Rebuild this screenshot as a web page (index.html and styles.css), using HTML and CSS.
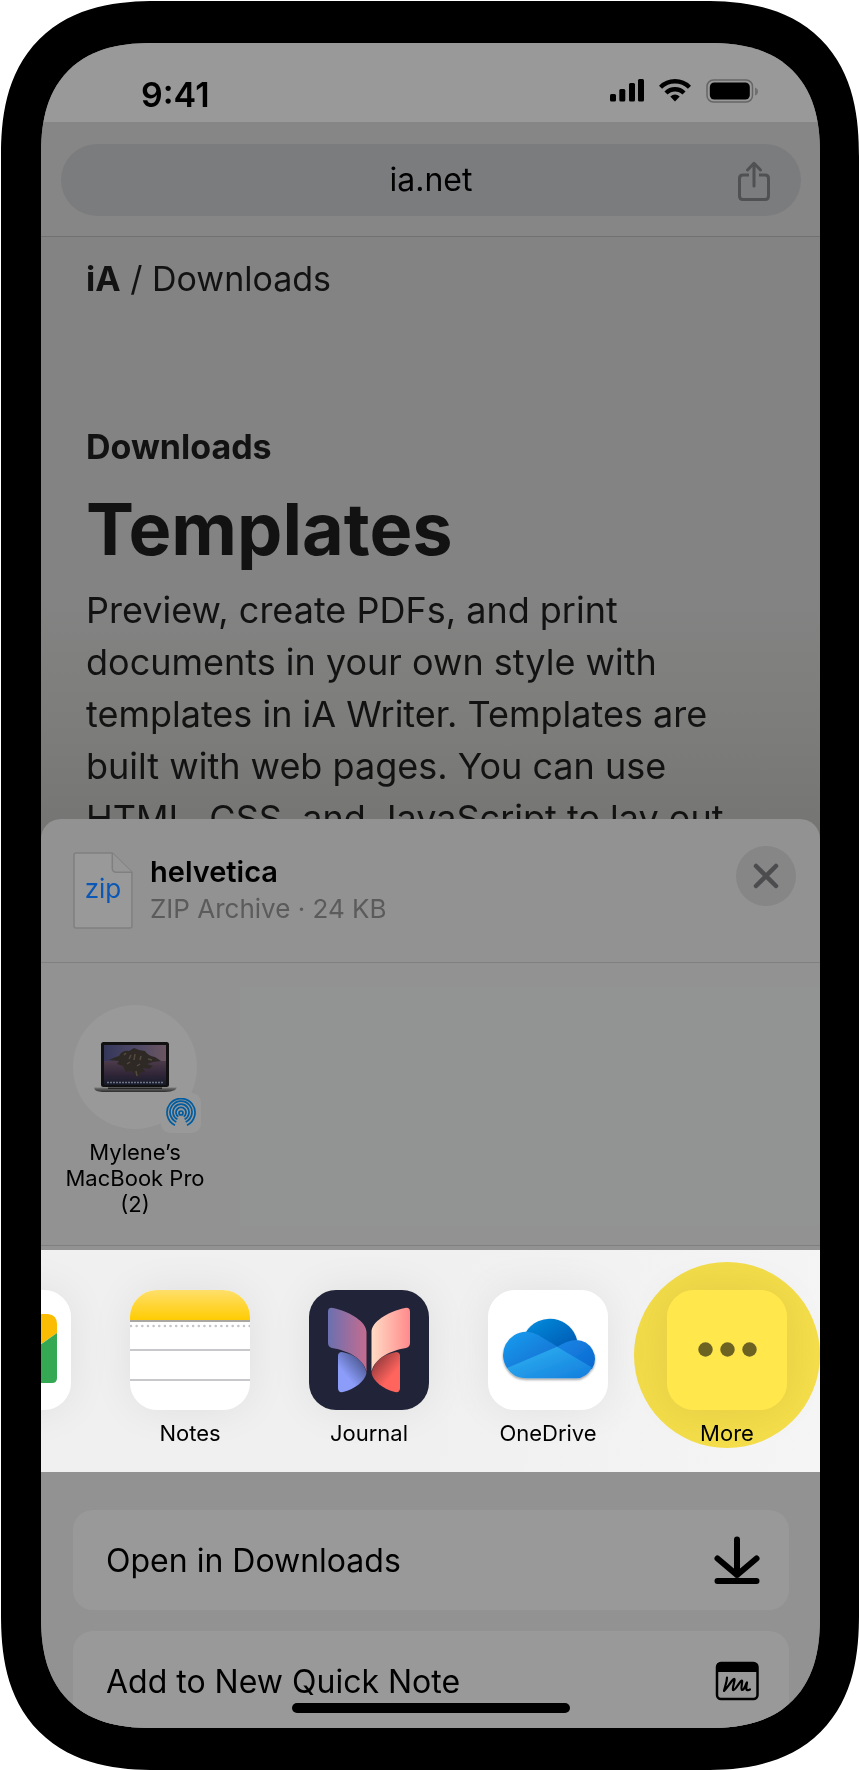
FILE: index.html
```html
<!DOCTYPE html>
<html lang="en">
<head>
<meta charset="utf-8">
<meta name="viewport" content="width=device-width, initial-scale=1">
<title>Templates</title>
<link rel="stylesheet" href="styles.css">
</head>
<body>
<div class="phone">
  <div class="screen">
    <header class="status">
      <time class="clock">9:41</time>
      <div class="indicators">
        <svg width="34" height="24" viewBox="0 0 34 24" aria-hidden="true"><rect x="0" y="15" width="6" height="7.500" rx="1.500"/><rect x="9.300" y="10" width="6" height="12.500" rx="1.500"/><rect x="19" y="4" width="6" height="18.500" rx="1.500"/><rect x="28" y="0" width="6" height="22.500" rx="1.500"/></svg>
        <svg width="32" height="24" viewBox="0 0 32 24" fill="none" stroke="#000" stroke-width="4.400" aria-hidden="true"><path d="M1.500 8.300C9.500 .300 22.500 .300 30.500 8.300"/><path d="M7 14C12 8.900 20 8.900 25 14"/><path d="M11.300 17.500Q16 13.700 20.700 17.500L16 22.400Z" fill="#000" stroke="none"/></svg>
        <svg width="53" height="24" viewBox="0 0 53 24" aria-hidden="true"><rect x="1" y="1" width="45.500" height="22" rx="6.500" fill="none" stroke="#666" stroke-width="1.500"/><rect x="3.800" y="3.500" width="40" height="17" rx="4.500"/><path d="M49 8.500Q52 9.500 52 12.500T49 16.500Z" fill="#707070"/></svg>
      </div>
    </header>

    <div class="toolbar">
      <div class="address">
        <input class="url" type="text" value="ia.net" aria-label="Address">
        <button class="share" type="button" aria-label="Share">
          <svg width="34" height="40" viewBox="0 0 34 40" fill="none" stroke="#505153" stroke-width="3" stroke-linecap="round" stroke-linejoin="round"><path d="M17 25V3M10.500 9 17 2.300 23.500 9"/><path stroke-linecap="butt" d="M12 14H6Q2.500 14 2.500 17.500V35Q2.500 38.500 6 38.500H28Q31.500 38.500 31.500 35V17.500Q31.500 14 28 14H22"/></svg>
        </button>
      </div>
    </div>

    <main class="page">
      <nav class="crumbs"><a class="home" href="#">iA</a> / <a href="#">Downloads</a></nav>
      <p class="kicker">Downloads</p>
      <h1 class="title">Templates</h1>
      <p class="intro">Preview, create PDFs, and print<br>documents in your own style with<br>templates in iA Writer. Templates are<br>built with web pages. You can use<br>HTML, CSS, and JavaScript to lay out</p>
    </main>

    <section class="sheet" aria-label="Share sheet">
      <header class="file">
        <svg class="file-icon" width="60" height="77" viewBox="0 0 58 76" preserveAspectRatio="none" aria-hidden="true"><path d="M3 1H38L57 20V73Q57 75 55 75H3Q1 75 1 73V3Q1 1 3 1Z" fill="#999" stroke="#808080" stroke-width="1.500"/><path d="M38 1V16Q38 20 42 20H57" fill="#969696" stroke="#808080" stroke-width="1.500"/></svg>
        <span class="file-type">zip</span>
        <div class="file-text">
          <h2 class="file-name">helvetica</h2>
          <p class="file-info">ZIP Archive · 24 KB</p>
        </div>
        <button class="close" type="button" aria-label="Close">
          <svg width="26" height="26" viewBox="0 0 26 26" stroke="#4c4c4f" stroke-width="4.500" stroke-linecap="round"><path d="M3 3 23 23M23 3 3 23"/></svg>
        </button>
      </header>

      <div class="people">
        <button class="person" type="button">
          <span class="avatar">
            <svg width="124" height="124" viewBox="0 0 124 124" aria-hidden="true">
              <defs>
                <linearGradient id="sky" x1="0" y1="0" x2="1" y2="0"><stop offset="0" stop-color="#34365a"/><stop offset=".5" stop-color="#4d4866"/><stop offset="1" stop-color="#6a5560"/></linearGradient>
                <linearGradient id="sea" x1="0" y1="0" x2="0" y2="1"><stop offset="0" stop-color="#4d3b4a"/><stop offset=".5" stop-color="#33283a"/><stop offset="1" stop-color="#171a2b"/></linearGradient>
                <linearGradient id="base" x1="0" y1="0" x2="0" y2="1"><stop offset="0" stop-color="#777"/><stop offset=".5" stop-color="#515152"/><stop offset="1" stop-color="#2d2d2e"/></linearGradient>
              </defs>
              <rect x="28" y="37" width="68" height="45" rx="2.500" fill="#111"/>
              <rect x="31" y="40" width="62" height="40" fill="url(#sky)"/>
              <path d="M31 56H93V80H31Z" fill="url(#sea)"/>
              <path d="M36 55Q42 52 46 51Q49 45 56 46L61 43L66 45L72 46Q75 51 82 52L88 56L80 57L74 59L80 61L76 64L70 63L72 67L66 68L68 73L62 70L58 66L53 67L50 61L44 59L46 56Z" fill="#2f2926"/>
              <path d="M51 50L53 48M56 54L58 50M62 49L61 55M68 51L67 55M75 54L79 55M54 59L57 57M64 61L67 59M63 66L64 71" fill="none" stroke="#544a40" stroke-width="1.500"/>
              <path d="M34 77.500H90" stroke="#6b7483" stroke-width="1.700" stroke-dasharray="2 1"/>
              <path d="M21 82.500H104L102 85Q98 87 92 87H33Q25 87 22 85Z" fill="url(#base)"/>
              <path d="M35 82.500H89V84H35Z" fill="#252525"/>
            </svg>
            <span class="badge">
              <svg width="30" height="30" viewBox="0 0 30 30" fill="none" stroke="#005c9f" stroke-width="1.700" aria-hidden="true"><path d="M9 27.200A14 14 0 1 1 21 27.200M10.300 24A11 11 0 1 1 19.700 24M11.400 21.300A8 8 0 1 1 18.600 21.300M12.300 18.600A5 5 0 1 1 17.700 18.600"/><circle cx="15" cy="15" r="2"/></svg>
            </span>
          </span>
          <span class="person-name">Mylene’s MacBook Pro (2)</span>
        </button>
        <div class="people-space"></div>
      </div>

      <div class="apps">
        <button class="app" type="button" aria-label="Meet">
          <svg class="app-icon" viewBox="0 0 120 120"><rect width="120" height="120" fill="#fff"/><path d="M60 24H97Q106 25 106 34V43L80 61H60Z" fill="#fbbc04"/><path d="M106 43V88Q106 93 101 93H60V75Z" fill="#34a853"/></svg>
        </button>
        <button class="app" type="button">
          <svg class="app-icon" viewBox="0 0 120 120" aria-hidden="true"><defs><linearGradient id="notes" x2="0" y2="1"><stop stop-color="#ffdf6b"/><stop offset="1" stop-color="#ffcc02"/></linearGradient></defs><rect width="120" height="120" fill="#fff"/><rect width="120" height="30" fill="url(#notes)"/><path d="M0 31H120" stroke="#aaa7a0" stroke-width="2"/><path d="M0 60H120M0 90H120" stroke="#c8c7cc" stroke-width="2"/><path d="M1 36H120" stroke="#c4c4c9" stroke-width="2.600" stroke-linecap="round" stroke-dasharray="0 5.650"/></svg>
          <span class="app-name">Notes</span>
        </button>
        <button class="app" type="button">
          <svg class="app-icon" viewBox="0 0 120 120" aria-hidden="true">
            <defs>
              <linearGradient id="wing-a"><stop stop-color="#6a70b0"/><stop offset="1" stop-color="#c56c8f"/></linearGradient>
              <linearGradient id="wing-b"><stop stop-color="#ffdcc4"/><stop offset="1" stop-color="#ff8a8c"/></linearGradient>
              <linearGradient id="wing-c" x1=".8" y1="0" x2=".3" y2=".6"><stop stop-color="#424d80"/><stop offset="1" stop-color="#8b9cf9"/></linearGradient>
              <linearGradient id="wing-d" x1=".2" y1="0" x2=".7" y2=".6"><stop stop-color="#843438"/><stop offset="1" stop-color="#ff645d"/></linearGradient>
            </defs>
            <rect width="120" height="120" fill="#212338"/>
            <path d="M29 66Q29 62 33 62Q54 66 57.500 83C56 91 46 99 34 102Q29 103 29 98Z" fill="url(#wing-c)"/>
            <path d="M91 66Q91 62 87 62Q66 66 62.500 83C64 91 74 99 86 102Q91 103 91 98Z" fill="url(#wing-d)"/>
            <path d="M19 22Q19 17 24 18C42 22 57.500 32 57.500 42V82C55 68 37 60 23 58Q19 57 19 53Z" fill="url(#wing-a)"/>
            <path d="M101 22Q101 17 96 18C78 22 62.500 32 62.500 42V82C65 68 83 60 97 58Q101 57 101 53Z" fill="url(#wing-b)"/>
          </svg>
          <span class="app-name">Journal</span>
        </button>
        <button class="app" type="button">
          <svg class="app-icon" viewBox="0 0 120 120" aria-hidden="true">
            <defs>
              <linearGradient id="cloud-a" x2="1" y2="1"><stop stop-color="#088ddd"/><stop offset="1" stop-color="#0056b0"/></linearGradient>
              <linearGradient id="cloud-b" x2="1" y2="1"><stop stop-color="#1a9ff0"/><stop offset="1" stop-color="#1269cf"/></linearGradient>
              <linearGradient id="cloud-c" x2="1" y2="1"><stop stop-color="#1a86e4"/><stop offset="1" stop-color="#0a68d0"/></linearGradient>
              <linearGradient id="cloud-d" x2="1" y2="1"><stop stop-color="#30b5f2"/><stop offset="1" stop-color="#137ddd"/></linearGradient>
              <filter id="cloud-shadow" x="-20%" y="-20%" width="140%" height="150%"><feDropShadow dx="0" dy="1.500" stdDeviation="1.200" flood-opacity=".4"/></filter>
            </defs>
            <rect width="120" height="120" fill="#fff"/>
            <g filter="url(#cloud-shadow)">
              <path d="M38 42A28 28 0 0 1 89 50L80 60H60Z" fill="url(#cloud-a)"/>
              <path d="M19 78A23.300 23.300 0 0 1 38 41.700Q45 42 50 45L70 57L50 78Z" fill="url(#cloud-b)"/>
              <path d="M69 57Q80 50 88 50A19 19 0 0 1 104 79L90 80Z" fill="url(#cloud-c)"/>
              <path d="M19 78L69 56.700L104 77.500Q99 88 88 88.300H38Q25 88 19 78Z" fill="url(#cloud-d)"/>
            </g>
          </svg>
          <span class="app-name">OneDrive</span>
        </button>
        <button class="app highlighted" type="button">
          <svg class="app-icon" viewBox="0 0 120 120" aria-hidden="true"><rect width="120" height="120" fill="#fff"/><g fill="#6c6c71"><circle cx="38.500" cy="59.500" r="7.200"/><circle cx="60.500" cy="59.500" r="7.200"/><circle cx="82.500" cy="59.500" r="7.200"/></g></svg>
          <span class="app-name">More</span>
        </button>
      </div>

      <div class="actions">
        <button class="action" type="button">Open in Downloads
          <svg width="46" height="48" viewBox="0 0 46 48" fill="none" stroke="#000" stroke-width="6" stroke-linecap="round" stroke-linejoin="round" aria-hidden="true"><path d="M23 3.500V39M3.500 22.500 23 39 42.500 22.500M3.500 45H42.500"/></svg>
        </button>
        <button class="action" type="button">Add to New Quick Note
          <svg width="46" height="40" viewBox="0 0 46 40" fill="none" stroke="#000" aria-hidden="true"><rect x="3" y="2" width="40.500" height="36" rx="4" stroke-width="2.500"/><path d="M3 10.500V5Q3 2 6 2H40Q43.500 2 43.500 5V10.500Z" fill="#000"/><path d="M13 16.500C13 21 11 25 10 30C14 26 17 20 20 18C22 17 18 27 19 29C21 30 25 22 27 20C30 17 26 28 28 29C31 29 33 19 33 22C32 26 31 31 36 28.500" stroke-width="2.200" stroke-linecap="round" stroke-linejoin="round"/></svg>
        </button>
      </div>
    </section>
    <div class="home-bar"></div>
  </div>
</div>
</body>
</html>
```

FILE: styles.css
```css
* {
  box-sizing: border-box;
}

body {
  margin: 0;
  padding: 1px 1px 0;
  background: #fff;
  color: #000;
  font-family: Inter, "Liberation Sans", sans-serif;
}

h1,
h2,
p {
  margin: 0;
}

svg {
  display: block;
  flex: none;
}

a {
  color: inherit;
  text-decoration: none;
}

button,
input {
  margin: 0;
  padding: 0;
  border: 0;
  background: none;
  color: inherit;
  font: inherit;
}

.phone {
  padding: 42px 39px 42px 40px;
  border-radius: 128px;
  background: #000;
}

.screen {
  position: relative;
  overflow: hidden;
  border-radius: 88px;
  background: #838383;
}

@supports (corner-shape: superellipse(1.3)) {
  .phone {
    border-radius: 156px;
    corner-shape: superellipse(1.3);
  }

  .screen {
    border-radius: 112px;
    corner-shape: superellipse(1.3);
  }
}

/* Status bar */

.status {
  display: flex;
  justify-content: space-between;
  align-items: flex-start;
  padding: 32px 61px 7px 100px;
  background: #999;
}

.clock {
  font-size: 34px;
  font-weight: 600;
  line-height: 40px;
}

.indicators {
  display: flex;
  gap: 15px;
  padding-top: 4px;
}

/* Address bar */

.toolbar {
  padding: 22px 19px 20px 20px;
  border-bottom: 1px solid #717171;
  background: #868686;
}

.address {
  display: flex;
  align-items: center;
  height: 72px;
  padding: 0 30px;
  border-radius: 36px;
  background: #7b7c7e;
}

.url {
  flex: 1;
  min-width: 0;
  padding-left: 34px;
  font-size: 32px;
  line-height: 40px;
  text-align: center;
}

.share {
  padding-top: 2px;
}

/* Web page */

.page {
  padding: 22px 45px 0;
  background: linear-gradient(#838383 60%, #7d7d7b 80%, #747472);
  color: #121212;
}

.crumbs {
  font-size: 34px;
  line-height: 40px;
}

.home {
  font-weight: 700;
}

.kicker {
  margin-top: 128px;
  font-size: 34px;
  font-weight: 700;
  line-height: 40px;
}

.title {
  margin-top: 22px;
  font-size: 72px;
  font-weight: 700;
  line-height: 80px;
}

.intro {
  margin-top: 15px;
  font-size: 36px;
  line-height: 52px;
  white-space: nowrap;
}

/* Share sheet */

.sheet {
  position: relative;
  margin-top: -25px;
  border-radius: 20px 20px 0 0;
  background: #929292;
}

.file {
  display: flex;
  align-items: flex-start;
  padding: 33px 24px 33px 32px;
  border-bottom: 1px solid #808080;
}

/* Sits over the sheet of paper in the file icon */
.file-type {
  width: 60px;
  margin-left: -60px;
  padding-top: 19px;
  color: #0a57b5;
  font-size: 26px;
  line-height: 36px;
  text-align: center;
}

.file-text {
  flex: 1;
  padding: 2px 17px 0;
}

.file-name {
  font-size: 29px;
  font-weight: 600;
  line-height: 36px;
}

.file-info {
  color: #5b5b5c;
  font-size: 26px;
  line-height: 38px;
}

.close {
  display: grid;
  place-items: center;
  width: 60px;
  height: 60px;
  margin-top: -6px;
  border-radius: 50%;
  background: #868686;
}

.people {
  display: flex;
  padding-top: 24px;
  border-bottom: 1px solid #7f7f7f;
}

.person {
  display: flex;
  flex-direction: column;
  align-items: center;
  width: 188px;
  padding: 18px 22px 28px 22px;
}

.avatar {
  position: relative;
  border-radius: 50%;
  background: #999;
}

.badge {
  position: absolute;
  right: -4px;
  bottom: -4px;
  display: grid;
  place-items: center;
  width: 40px;
  height: 40px;
  border-radius: 9px;
  background: #999;
}

.person-name {
  width: 144px;
  margin-top: 10px;
  font-size: 22px;
  line-height: 26px;
}

.people-space {
  flex: 1;
  margin: 0 0 19px 11px;
  background: #919493;
}

.apps {
  display: flex;
  justify-content: flex-end;
  gap: 59px;
  margin-top: 4px;
  padding: 40px 33px 24px 0;
  overflow: hidden;
  background: linear-gradient(100deg, #f0f0f0, #eff0ef 50%, #f5f5f5);
}

.app {
  position: relative;
  display: flex;
  flex: none;
  flex-direction: column;
  align-items: center;
  width: 120px;
}

.app-icon {
  width: 120px;
  height: 120px;
  border-radius: 27px;
  box-shadow: 0 0 44px rgb(0 0 0 / 7%);
}

.app-name {
  margin-top: 8px;
  font-size: 22px;
  line-height: 30px;
}

.highlighted::after {
  position: absolute;
  top: -28px;
  left: -33px;
  width: 186px;
  height: 186px;
  border-radius: 50%;
  background: #ffe74c;
  content: "";
  mix-blend-mode: multiply;
}

.actions {
  display: grid;
  gap: 21px;
  margin-bottom: -3px;
  padding: 38px 31px 0 32px;
}

.action {
  display: flex;
  justify-content: space-between;
  align-items: center;
  height: 100px;
  padding: 0 29px 0 33px;
  border-radius: 20px;
  background: #999;
  font-size: 32px;
}

.home-bar {
  position: absolute;
  bottom: 15px;
  left: 50%;
  width: 278px;
  height: 10px;
  margin-left: -139px;
  border-radius: 5px;
  background: #000;
}
```
